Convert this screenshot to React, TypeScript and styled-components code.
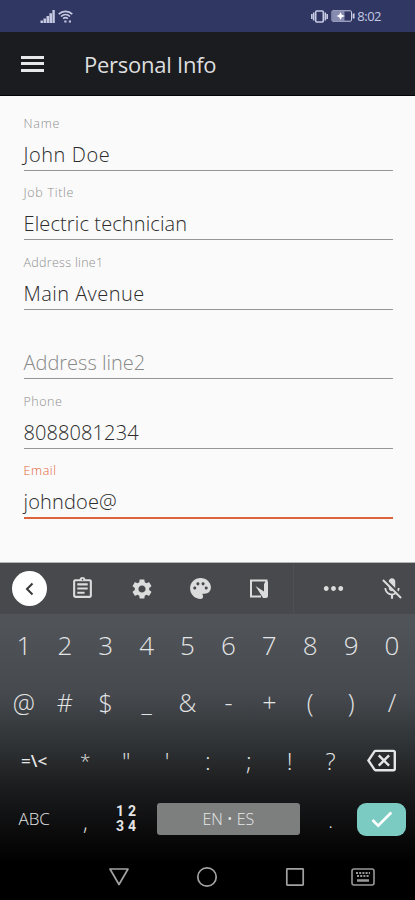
import React from "react";
import styled, { createGlobalStyle } from "styled-components";
import { MdOutlineAssignment, MdSettings, MdPalette, MdMoreHoriz, MdMicOff, MdOutlineBackspace } from "react-icons/md";

const GlobalStyle = createGlobalStyle`
  * { box-sizing: border-box; }
  body { margin: 0; background: #000; }
`;

const Screen = styled.div`
  width: 415px;
  height: 900px;
  display: flex;
  flex-direction: column;
  overflow: hidden;
  background: #fafafa;
  font-family: "Open Sans", "Noto Sans", sans-serif;
`;

const StatusBar = styled.div`
  height: 32px;
  flex: none;
  display: flex;
  align-items: center;
  justify-content: space-between;
  padding: 0 34px 0 40px;
  background: #303763;
  color: #c5cae2;
`;

const StatusGroup = styled.div`
  display: flex;
  align-items: center;
  gap: 2.5px;
`;

const Clock = styled.span`
  font-size: 13px;
  line-height: 16px;
  letter-spacing: -0.5px;
`;

const AppBar = styled.header`
  height: 64px;
  flex: none;
  display: flex;
  align-items: center;
  padding-left: 21px;
  background: #1b1c20;
  border-bottom: 1px solid #050506;
`;

const MenuIcon = styled.div`
  width: 23px;
  height: 16px;
  display: flex;
  flex-direction: column;
  justify-content: space-between;
`;

const MenuLine = styled.span`
  height: 3px;
  background: #e8e8ea;
`;

const Title = styled.h1`
  margin: 0 0 0 40px;
  font-size: 22px;
  font-weight: 400;
  line-height: 30px;
  letter-spacing: -0.25px;
  color: #dededf;
`;

const Form = styled.main`
  height: 467px;
  flex: none;
  padding: 5px 22.5px 0 23.5px;
  border-bottom: 1px solid #b4b6b8;
`;

const Field = styled.div<{ $active?: boolean }>`
  height: 69.6px;
  display: flex;
  flex-direction: column;
  justify-content: flex-end;
  border-bottom: ${(p) => (p.$active ? "2px solid #dc643c" : "1px solid #969696")};
`;

const Label = styled.label<{ $active?: boolean; $spacing: number }>`
  font-size: 12.5px;
  font-weight: 300;
  line-height: 18px;
  height: 18px;
  margin-bottom: 8px;
  letter-spacing: ${(p) => p.$spacing}px;
  color: ${(p) => (p.$active ? "#e2633a" : "#8f8f8f")};
`;

const Value = styled.div<{ $muted?: boolean; $spacing: number }>`
  font-size: 20px;
  font-weight: 300;
  line-height: 27px;
  height: 29px;
  letter-spacing: ${(p) => p.$spacing}px;
  color: ${(p) => (p.$muted ? "#888" : "#2c2c2c")};
`;

const Keyboard = styled.section`
  flex: 1;
  background: linear-gradient(#505358 0, #505358 60px, #464a4e 130px, #303335 180px, #1b1c1e 225px, #0b0b0c 270px, #000 300px);
  color: #e4e5e6;
`;

const Tools = styled.div`
  height: 51px;
  display: grid;
  grid-template-columns: 59px 47px 71px 47px 70px 78px 39px;
  align-items: center;
  justify-items: center;
  background: #48494d;
  color: #dcdcdd;
  svg { display: block; }
`;

const Back = styled.button`
  width: 35px;
  height: 35px;
  padding: 0;
  border: 0;
  border-radius: 50%;
  display: grid;
  place-items: center;
  background: #fff;
`;

const Divided = styled.div`
  width: 100%;
  height: 51px;
  display: grid;
  place-items: center;
  border-right: 1px solid #4e5054;
`;

const KeyRow = styled.div<{ $columns: string; $drop?: number }>`
  height: 58px;
  display: grid;
  grid-template-columns: ${(p) => p.$columns};
  align-items: center;
  justify-items: center;
  padding: ${(p) => p.$drop ?? 0}px 2.5px 0 3.5px;
`;

const Key = styled.span<{ $size?: number; $weight?: number; $shift?: number }>`
  font-size: ${(p) => p.$size ?? 26}px;
  font-weight: ${(p) => p.$weight ?? 350};
  line-height: 34px;
  padding-top: ${(p) => p.$shift ?? 0}px;
  white-space: nowrap;
`;

const PadKey = styled.span`
  display: grid;
  grid-template-columns: 12px 12px;
  justify-items: center;
  font: 700 14px/15.5px Roboto, sans-serif;
`;

const Space = styled.div`
  width: 143px;
  height: 32px;
  border-radius: 3px;
  display: grid;
  place-items: center;
  background: #7d7f7f;
  color: #e6e7e7;
  font-size: 16px;
  font-weight: 350;
  letter-spacing: -0.1px;
`;

const Enter = styled.div`
  width: 49px;
  height: 33px;
  border-radius: 9px;
  display: grid;
  place-items: center;
  background: #7ccbc3;
`;

const NavBar = styled.nav`
  height: 54px;
  display: grid;
  grid-template-columns: 88px 88px 88px 47px;
  justify-items: center;
  align-items: center;
  padding: 7px 0 0 75px;
`;

const TEN = "repeat(10, 40.9px)";
const NINE = "61.3px repeat(7, 40.9px) 61.3px";
const BOTTOM = "61.3px 40.9px 40.9px 163.6px 40.9px 61.3px";

const fields = [
  { label: "Name", labelSpacing: 0.8, value: "John Doe", spacing: 0.55 },
  { label: "Job Title", labelSpacing: 0.7, value: "Electric technician", spacing: 0.12 },
  { label: "Address line1", labelSpacing: 0.3, value: "Main Avenue", spacing: 0.45 },
  { label: "", labelSpacing: 0, value: "Address line2", spacing: 0, muted: true },
  { label: "Phone", labelSpacing: 0.5, value: "8088081234", spacing: 0.1 },
  { label: "Email", labelSpacing: 0.6, value: "johndoe@", spacing: 0.15, active: true },
];

export default function App() {
  return (
    <Screen>
      <GlobalStyle />
      <StatusBar>
        <StatusGroup>
          <svg width="15" height="13" viewBox="0 0 15 13" fill="currentColor">
            <path d="M.5 10.500h2.500V13H.5zM3.500 8.500H6V13H3.500zM6.500 6H9v7H6.500zM9.400 3.300H12V13H9.400zM12.400 0H14.800v13h-2.400z" />
          </svg>
          <svg width="15" height="13" viewBox="0 0 15 13" fill="none" stroke="currentColor" strokeWidth="1.700">
            <path d="M.7 4.200C4.500.4 10.500.4 14.300 4.200M3 6.500c2.600-2.400 6.400-2.400 9 0M5.100 8.700c1.400-1.200 3.400-1.200 4.800 0" />
            <path d="M6.300 11.500h2.200M10.800 11.500H13" strokeWidth="2.200" />
          </svg>
        </StatusGroup>
        <StatusGroup>
          <svg width="17" height="13" viewBox="0 0 17 13" fill="none" stroke="currentColor" strokeWidth="1.600">
            <rect x="4.700" y="1" width="7.600" height="11" rx="1" />
            <path d="M2.700 2.500v8M14.300 2.500v8M.8 4v5M16.200 4v5" />
          </svg>
          <svg width="24" height="12" viewBox="0 0 24 12" fill="none" stroke="currentColor">
            <path d="M2 .8h17.500q1 0 1 1v8.400q0 1-1 1H2q-1 0-1-1V1.800q0-1 1-1z" strokeWidth="1" />
            <path d="M1.500 1h12v10h-12z" fill="#858bb1" stroke="none" />
            <path d="M22.600 3.500v5" strokeWidth="2" />
            <path d="M9.500 2l1.200 2.800 3.300 1.200-3.300 1.200L9.500 10 8.300 7.200 5.500 6l2.800-1.200z" fill="#fff" stroke="none" />
          </svg>
          <Clock>8:02</Clock>
        </StatusGroup>
      </StatusBar>
      <AppBar>
        <MenuIcon><MenuLine /><MenuLine /><MenuLine /></MenuIcon>
        <Title>Personal Info</Title>
      </AppBar>
      <Form>
        {fields.map((f) => (
          <Field key={f.value} $active={f.active}>
            <Label $active={f.active} $spacing={f.labelSpacing}>{f.label}</Label>
            <Value $muted={f.muted} $spacing={f.spacing}>{f.value}</Value>
          </Field>
        ))}
      </Form>
      <Keyboard>
        <Tools>
          <Back>
            <svg width="10" height="14" viewBox="0 0 10 14" fill="none" stroke="#38383a" strokeWidth="2">
              <path d="M7.500 1.500L2 7l5.500 5.500" />
            </svg>
          </Back>
          <MdOutlineAssignment size={25} />
          <MdSettings size={24} />
          <MdPalette size={25} />
          <Divided>
            <svg width="20" height="20" viewBox="0 0 20 20" fill="none" stroke="currentColor" strokeWidth="2">
              <path d="M12 17.500H2V1.500h15.500V10" />
              <path d="M6.500 7l8.500 5.500V5l1.500-2.500H19V17q0 2-2 2h-3l-1.500-2.500z" fill="currentColor" stroke="none" />
            </svg>
          </Divided>
          <MdMoreHoriz size={29} />
          <MdMicOff size={26} />
        </Tools>
        <KeyRow $columns={TEN}>
          {[..."1234567890"].map((k) => <Key key={k} $shift={3}>{k}</Key>)}
        </KeyRow>
        <KeyRow $columns={TEN}>
          {[..."@#$_&-+()/"].map((k) => <Key key={k} $size={25} $shift={2}>{k}</Key>)}
        </KeyRow>
        <KeyRow $columns={NINE} $drop={3}>
          <Key $size={17} $weight={600}>=\&lt;</Key>
          {[..."*\"':;!?"].map((k) => <Key key={k} $size={k === "*" ? 19 : 24}>{k}</Key>)}
          <MdOutlineBackspace size={29} />
        </KeyRow>
        <KeyRow $columns={BOTTOM} $drop={4}>
          <Key $size={17}>ABC</Key>
          <Key $size={22} $shift={4}>,</Key>
          <PadKey><span>1</span><span>2</span><span>3</span><span>4</span></PadKey>
          <Space>EN • ES</Space>
          <Key $size={20} $shift={4}>.</Key>
          <Enter>
            <svg width="22" height="17" viewBox="0 0 22 17" fill="none" stroke="#fff" strokeWidth="2.600">
              <path d="M1.500 9l5.700 5.700L20.300 1.500" />
            </svg>
          </Enter>
        </KeyRow>
        <NavBar>
          <svg width="22" height="20" viewBox="0 0 22 20" fill="none" stroke="#a2a2a2" strokeWidth="1.700" strokeLinejoin="round">
            <path d="M2 2h18l-9 15.500z" />
          </svg>
          <svg width="22" height="22" viewBox="0 0 22 22" fill="none" stroke="#a2a2a2" strokeWidth="1.700">
            <circle cx="11" cy="11" r="9.200" />
          </svg>
          <svg width="20" height="20" viewBox="0 0 20 20" fill="none" stroke="#a2a2a2" strokeWidth="1.700">
            <rect x="1.800" y="1.800" width="16.400" height="16.400" rx=".6" />
          </svg>
          <svg width="26" height="20" viewBox="0 0 26 20" fill="none" stroke="#999" strokeWidth="1.600">
            <rect x="2" y="2" width="22" height="16" rx="2" />
            <path d="M6 6h14M7 9h12" strokeDasharray="2 1.200" strokeWidth="2" />
            <path d="M7 13.500h12" strokeWidth="2.500" />
          </svg>
        </NavBar>
      </Keyboard>
    </Screen>
  );
}
